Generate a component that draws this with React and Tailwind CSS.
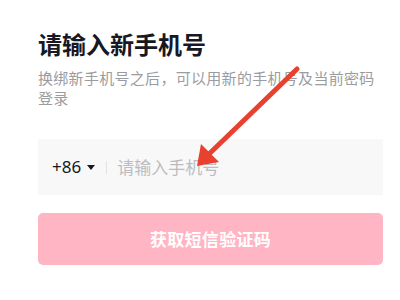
export default function App() {
  return (
    <div
      className="relative w-[400px] h-[300px] bg-white overflow-hidden"
      style={{ fontFamily: '"Noto Sans CJK SC", "Noto Sans", sans-serif' }}
    >
      <div className="pl-[38px] pr-[17px] pt-[28px]">
        {/* Titre */}
        <h1 className="h-[32px] text-[24px] leading-[32px] font-bold text-[#161823]">
          请输入新手机号
        </h1>
        <p className="mt-[8px] pr-[8px] text-[15px] leading-[20px] tracking-[0.3px] text-[#9b9ca0]">
          换绑新手机号之后，可以用新的手机号及当前密码登录
        </p>

        {/* Champ téléphone */}
        <div className="mt-[31px] h-[56px] bg-[#f8f8f9] flex items-center pl-[14px]">
          <span className="text-[17px] text-[#161823]" style={{ fontFamily: '"Noto Sans", sans-serif' }}>
            +86
          </span>
          <svg className="ml-[6px]" width="8" height="5" viewBox="0 0 8 5">
            <path d="M0 0 L8 0 L4 5 Z" fill="#161823" />
          </svg>
          <div className="ml-[11px] w-px h-[13px] bg-[#e3e3e4]" />
          <span className="ml-[10px] text-[17px] text-[#bcbcc0]">请输入手机号</span>
        </div>

        {/* Bouton */}
        <button className="mt-[18px] w-full h-[52px] rounded-[5px] bg-[#ffb5c3] text-white text-[17px] font-bold tracking-[0.3px]">
          获取短信验证码
        </button>
      </div>

      {/* Flèche */}
      <svg className="absolute left-0 top-0 pointer-events-none" width="400" height="300">
        <line x1="297" y1="69" x2="208" y2="155" stroke="#e8412f" strokeWidth="5" strokeLinecap="round" />
        <polygon points="197,166 201,144 219,162" fill="#e8412f" />
      </svg>
    </div>
  );
}
